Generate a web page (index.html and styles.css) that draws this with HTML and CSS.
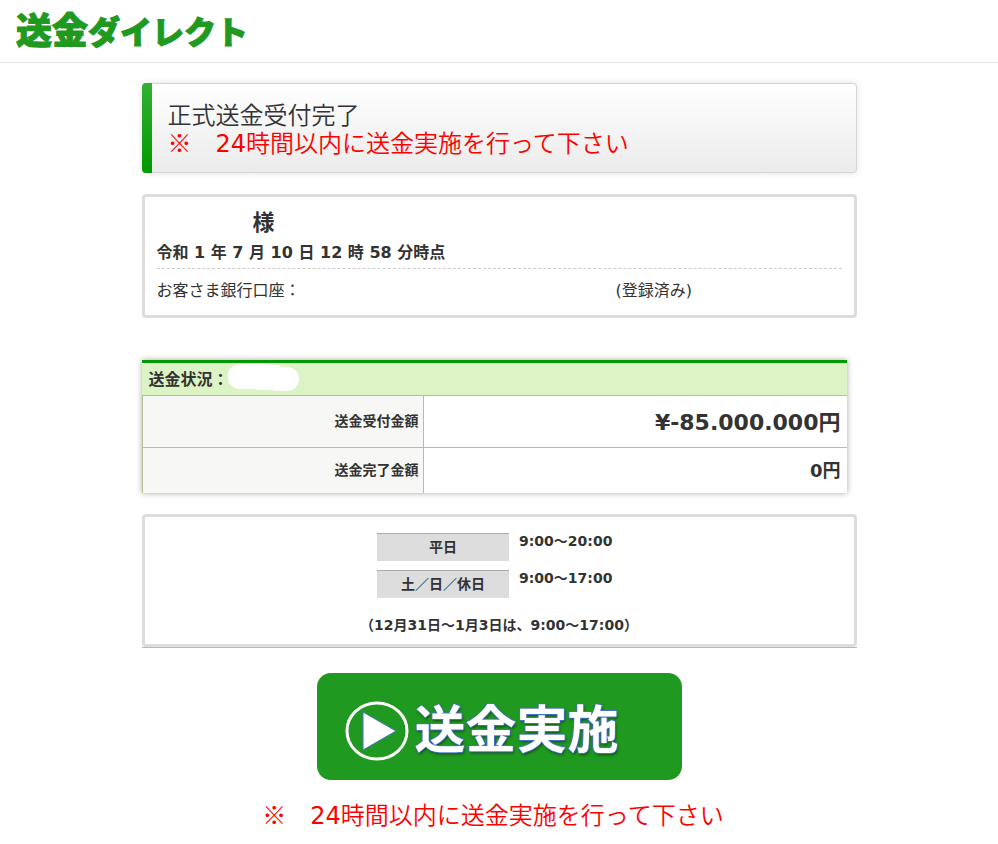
FILE: index.html
```
<!DOCTYPE html>
<html lang="ja">
<head>
    <meta charset="UTF-8">
    <meta name="viewport" content="width=device-width, initial-scale=1.0">
    <title>送金ダイレクト</title>
    <link rel="stylesheet" href="styles.css">
</head>
<body>
    <header class="site-header">
        <div class="logo">送金<span class="logo-kana">ダイレクト</span></div>
    </header>
    <main class="container">
        <h1 class="page-title">
            正式送金受付完了<br>
            <span class="alert">※　<span class="num">24</span>時間以内に送金実施を行って下さい</span>
        </h1>

        <section class="box customer">
            <p class="customer-name">様</p>
            <p class="customer-date">令和 1 年 7 月 10 日 12 時 58 分時点</p>
            <div class="account">
                <span>お客さま銀行口座：</span>
                <span>(登録済み)</span>
            </div>
        </section>

        <table class="status">
            <thead>
                <tr>
                    <th colspan="2" class="status-title">
                        <div class="status-line">
                            送金状況：
                            <svg class="status-mask" width="72" height="28" viewBox="0 0 72 28" aria-hidden="true">
                                <path fill="#fff" d="M12 0H36Q41 0 43 1H48Q52 1 54 3H59A12 12 0 0 1 59 27H50Q46 27 44 26H32Q29 26 28 25H12A12 12 0 0 1 12 0Z"/>
                            </svg>
                        </div>
                    </th>
                </tr>
            </thead>
            <tbody>
                <tr class="row-accepted">
                    <th scope="row">送金受付金額</th>
                    <td class="amount">¥-85.000.000円</td>
                </tr>
                <tr class="row-done">
                    <th scope="row">送金完了金額</th>
                    <td>0円</td>
                </tr>
            </tbody>
        </table>

        <section class="hours-wrap">
            <div class="box hours">
                <dl class="hours-list">
                    <dt>平日</dt>
                    <dd>9:00～20:00</dd>
                    <dt>土／日／休日</dt>
                    <dd>9:00～17:00</dd>
                </dl>
                <p class="hours-note">（12月31日～1月3日は、9:00～17:00）</p>
            </div>
        </section>

        <button type="button" class="send-button">
            <svg width="64" height="60" viewBox="0 0 64 60" aria-hidden="true">
                <ellipse cx="32" cy="30" rx="30" ry="28" fill="none" stroke="#fff" stroke-width="3"/>
                <path d="M18 11V49L51 30Z" fill="#fff" stroke="#4472c4" stroke-width="1"/>
            </svg>
            <span>送金実施</span>
        </button>
        <p class="footer-note alert">※　<span class="num">24</span>時間以内に送金実施を行って下さい</p>
    </main>
</body>
</html>
```
FILE: styles.css
```
* {
    box-sizing: border-box;
}
body {
    margin: 0;
    background-color: #fff;
    color: #333;
    font-family: "DejaVu Sans", "Noto Sans CJK JP", sans-serif;
    font-size: 16px;
}
p,
h1,
dl,
dd {
    margin: 0;
}
.site-header {
    display: flex;
    align-items: center;
    height: 63px;
    padding: 0 16px 4px;
    border-bottom: 1px solid #e5e5e5;
}
.logo {
    color: #1f991f;
    font-family: "Noto Sans CJK JP", sans-serif;
    font-size: 36px;
    font-weight: 900;
    line-height: 40px;
    -webkit-text-stroke: 1px #1f991f;
}
.logo-kana {
    font-size: 32px;
}
.container {
    max-width: 715px;
    margin: 0 auto;
    padding: 20px 0 16px;
}
.alert {
    color: #f00;
}
.num {
    font-family: "DejaVu Sans", sans-serif;
    font-weight: 400;
    line-height: 1;
}
.page-title,
.footer-note {
    font-family: "Noto Sans CJK JP", sans-serif;
    font-size: 24px;
    font-weight: 350;
    line-height: 28px;
}
.page-title {
    position: relative;
    padding: 16px 16px 16px 26px;
    border: 1px solid #d4d4d4;
    border-left: 0;
    border-radius: 4px;
    background: linear-gradient(#fff, #ebebeb);
    box-shadow: 0 0 6px rgba(0, 0, 0, 0.12);
}
.page-title::before {
    content: "";
    position: absolute;
    top: -1px;
    bottom: -1px;
    left: 0;
    width: 10px;
    border-radius: 4px 0 0 4px;
    background: linear-gradient(#33b033, #090);
}
.box {
    border: 3px solid #ddd;
    border-radius: 4px;
    background-color: #fff;
}
.customer {
    margin-top: 21px;
    padding: 11px 12px 9px;
}
.customer-name {
    padding-left: 96px;
    font-size: 22px;
    font-weight: bold;
    line-height: 30px;
}
.customer-date {
    font-weight: bold;
    line-height: 30px;
    border-bottom: 1px dashed #ccc;
}
.account {
    display: grid;
    grid-template-columns: 67% 33%;
    padding-top: 7px;
    line-height: 30px;
}
.status {
    width: calc(100% - 10px);
    margin-top: 42px;
    border-collapse: separate;
    border-spacing: 0;
    border-top: 3px solid #090;
    box-shadow: 0 0 6px rgba(0, 0, 0, 0.35);
    text-align: right;
}
.status th,
.status td {
    padding: 0 6px 4px;
}
.status .status-title {
    height: 32px;
    padding: 0 7px 2px;
    background-color: #dcf4c5;
    text-align: left;
}
.status-line {
    display: flex;
    align-items: center;
}
.status-mask {
    margin-left: -1px;
}
.status tbody th {
    width: 40%;
    padding-right: 4px;
    border: 1px solid #bbbf98;
    border-bottom: 0;
    background-color: #f7f7f5;
    font-size: 14px;
}
.status td {
    border-top: 1px solid #bbbf98;
    font-size: 18px;
    font-weight: bold;
}
.status .amount {
    font-size: 22px;
}
.row-accepted {
    height: 52px;
}
.row-done {
    height: 46px;
}
.hours-wrap {
    margin-top: 21px;
    border-bottom: 1px solid #bbbf98;
}
.hours {
    padding: 16px 12px 9px;
    font-size: 14px;
    font-weight: bold;
}
.hours-list {
    display: grid;
    grid-template-columns: 132px 102px;
    gap: 9px 10px;
    justify-content: center;
}
.hours-list dt {
    border-top: 1px solid #aaa;
    background-color: #ddd;
    line-height: 27px;
    text-align: center;
}
.hours-list dd {
    line-height: 16px;
}
.hours-note {
    margin-top: 17px;
    line-height: 20px;
    text-align: center;
}
.send-button {
    display: flex;
    align-items: center;
    gap: 6px;
    width: 365px;
    height: 107px;
    margin: 25px auto 0;
    padding: 0 28px 2px;
    border: 0;
    border-radius: 14px;
    background-color: #1f991f;
    color: #fff;
    font-family: "Noto Sans CJK JP", sans-serif;
    font-size: 51px;
    font-weight: 700;
    line-height: 60px;
    text-shadow: -1px 0 #4472c4, 1px 0 #4472c4, 0 -1px #4472c4, 0 1px #4472c4, 1px 2px 3px rgba(0, 0, 0, 0.5);
    cursor: pointer;
}
.send-button svg {
    margin-top: 10px;
}
.footer-note {
    margin-top: 20px;
    padding-right: 12px;
    text-align: center;
}
```
